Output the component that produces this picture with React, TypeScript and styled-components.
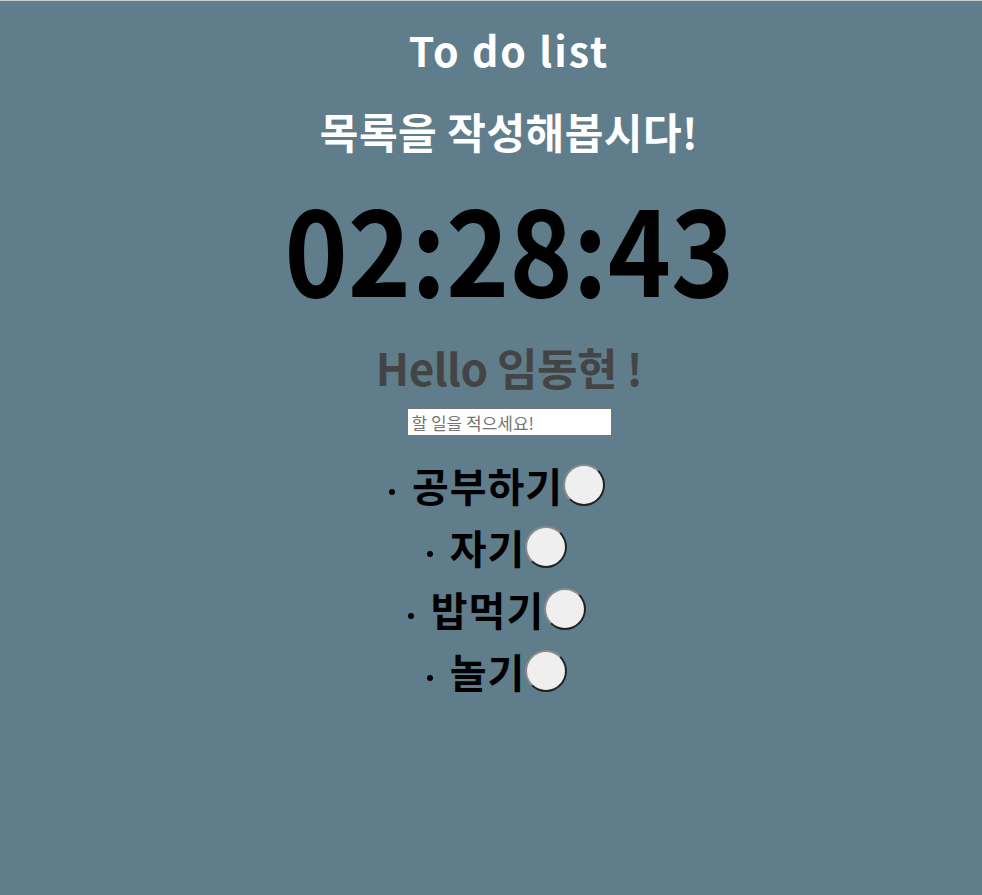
import React from "react";
import styled, { createGlobalStyle } from "styled-components";

const Global = createGlobalStyle`
  html, body { margin: 0; padding: 0; }
  body { background: #607d8b; font-family: "Noto Sans CJK KR", "Noto Sans", sans-serif; }
`;

const Page = styled.main`
  min-height: 895px;
  box-sizing: border-box;
  border-top: 1px solid #c9cdd0;
  background: #607d8b;
  display: flex;
  flex-direction: column;
  align-items: center;
  padding: 20px 0 0 36px;
`;

const Title = styled.h1<{ $size: number; $mt?: number; $ls: number }>`
  margin: ${(p) => p.$mt ?? 0}px 0 0;
  color: #ffffff;
  font-size: ${(p) => p.$size}px;
  line-height: 56px;
  font-weight: 700;
  letter-spacing: ${(p) => p.$ls}px;
`;

const Clock = styled.div`
  margin-top: 16px;
  color: #000;
  font-size: 120px;
  line-height: 140px;
  font-weight: 700;
  transform: scaleX(0.895);
`;

const Hello = styled.h2`
  margin: 24px 0 0;
  color: #444444;
  font-size: 44px;
  line-height: 56px;
  font-weight: 700;
  letter-spacing: -0.5px;
`;

const Input = styled.input`
  margin-top: 13px;
  width: 205px;
  height: 28px;
  box-sizing: border-box;
  border: 1px solid #767676;
  background: #fff;
  padding: 0 4px;
  font-family: "Noto Sans CJK KR", sans-serif;
  font-size: 17px;
  &::placeholder { color: #757575; }
`;

const List = styled.ul`
  list-style: none;
  margin: 28px 24px 0 0;
  padding: 0;
  display: flex;
  flex-direction: column;
  align-items: center;
  gap: 20px;
`;

const Item = styled.li`
  display: flex;
  align-items: center;
  height: 42px;
`;

const Dot = styled.span`
  width: 6px;
  height: 6px;
  border-radius: 50%;
  background: #000;
  margin: 14px 17px 0 0;
`;

const Label = styled.span`
  color: #000;
  font-size: 40px;
  line-height: 42px;
  font-weight: 700;
  letter-spacing: 1px;
`;

const Done = styled.button`
  width: 42px;
  height: 42px;
  padding: 0;
  border-radius: 50%;
  background: #efefef;
  border: 2px solid;
  border-color: #8a8a8a #222 #222 #8a8a8a;
  cursor: pointer;
`;

const todos = ["공부하기", "자기", "밥먹기", "놀기"];

export default function App() {
  return (
    <>
      <Global />
      <Page>
        <Title $size={41} $ls={2}>To do list</Title>
        <Title $size={42} $mt={26} $ls={0.5}>목록을 작성해봅시다!</Title>
        <Clock>02:28:43</Clock>
        <Hello>Hello 임동현 !</Hello>
        <Input placeholder="할 일을 적으세요!" />
        <List>
          {todos.map((t) => (
            <Item key={t}>
              <Dot />
              <Label>{t}</Label>
              <Done aria-label="삭제" />
            </Item>
          ))}
        </List>
      </Page>
    </>
  );
}
